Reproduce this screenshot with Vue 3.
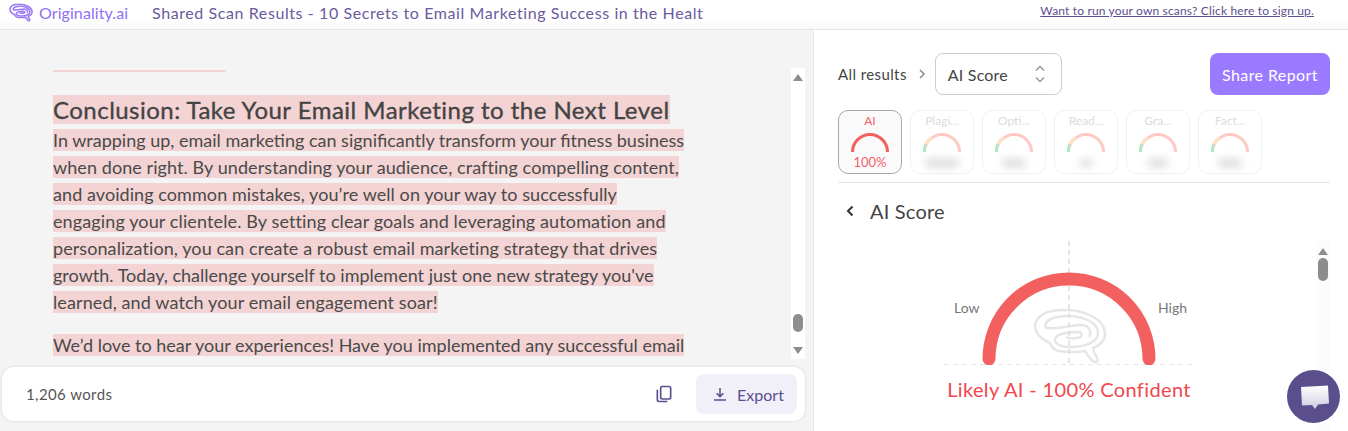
<template>
  <div class="page">
    <header class="topbar">
      <div class="logo">
        <svg class="logo-icon" viewBox="88 66 76 58" fill="none">
          <path :d="brainOuter" />
          <path :d="brainInner" />
          <path :d="brainFold" />
        </svg>
        <span>Originality.ai</span>
      </div>
      <div class="doc-title">Shared Scan Results - 10 Secrets to Email Marketing Success in the Healt</div>
      <a class="signup">Want to run your own scans? Click here to sign up.</a>
    </header>

    <main class="main">
      <section class="left">
        <div class="reader">
          <article class="doc">
            <div class="rule"></div>
            <h2 class="doc-heading"><span>Conclusion: Take Your Email Marketing to the Next Level</span></h2>
            <p class="para">
              <span v-for="line in conclusion" :key="line.text" class="line" :style="{ letterSpacing: line.spacing + 'px' }"><span>{{ line.text }}</span></span>
            </p>
            <p class="para para-next">
              <span class="line"><span>We’d love to hear your experiences! Have you implemented any successful email</span></span>
            </p>
          </article>
          <div class="scrollbar">
            <span class="arrow up"></span>
            <span class="thumb"></span>
            <span class="arrow down"></span>
          </div>
        </div>
        <div class="footer-card">
          <span class="words">1,206 words</span>
          <svg class="copy-icon" viewBox="0 0 24 24" fill="none">
            <rect x="8" y="3" width="12" height="15" rx="2" />
            <path d="M4 7v12a2 2 0 0 0 2 2h10" />
          </svg>
          <button class="export">
            <svg viewBox="0 0 24 24" fill="none">
              <path d="M12 4v11M7.5 11l4.5 4.5 4.5-4.5M4 20h16" />
            </svg>
            Export
          </button>
        </div>
      </section>

      <aside class="right">
        <div class="toolbar">
          <span class="crumb">All results</span>
          <svg class="crumb-arrow" viewBox="0 0 10 12" fill="none"><path d="M3 2l4 4-4 4" /></svg>
          <div class="select">
            <span>AI Score</span>
            <svg viewBox="0 0 12 20" fill="none"><path d="M2 6.5L6 2.5l4 4M2 13.5l4 4 4-4" /></svg>
          </div>
          <button class="share">Share Report</button>
        </div>

        <div class="tabs">
          <div v-for="tab in tabs" :key="tab.name" class="tab" :class="{ active: tab.active }">
            <span class="tab-name">{{ tab.name }}</span>
            <svg class="tab-gauge" viewBox="0 0 40 22" fill="none">
              <template v-if="tab.active">
                <path d="M2.5 21A17.5 17.5 0 0 1 37.5 21" stroke="#f25f5f" />
              </template>
              <template v-else>
                <path d="M2.5 21A17.5 17.5 0 0 1 37.5 21" stroke="#ffc9c5" />
                <path d="M3.5 13A17.5 17.5 0 0 1 10 6.6" stroke="#ffe0c8" />
                <path d="M2.5 21A17.5 17.5 0 0 1 3.5 13.5" stroke="#a6edc4" />
              </template>
            </svg>
            <span v-if="tab.active" class="tab-value">100%</span>
            <span v-else class="tab-blur" :style="{ width: tab.blur + 'px' }"></span>
          </div>
        </div>

        <div class="score-head">
          <svg viewBox="0 0 10 14" fill="none"><path d="M7.5 2.5L3 7l4.5 4.5" /></svg>
          <span>AI Score</span>
        </div>

        <div class="score-body">
          <div class="gauge">
            <svg viewBox="0 0 250 124" fill="none">
              <g class="brain">
                <path :d="brainOuter" />
                <path :d="brainInner" />
                <path :d="brainFold" />
              </g>
              <path class="dash" d="M125 0V124M0 124H250" />
              <path class="arc" d="M45 118A80 80 0 0 1 205 118" />
            </svg>
            <span class="low">Low</span>
            <span class="high">High</span>
          </div>
          <div class="verdict">Likely AI - 100% Confident</div>
          <div class="side-scroll">
            <span class="arrow up"></span>
            <span class="thumb"></span>
          </div>
        </div>
      </aside>
    </main>

    <div class="chat">
      <svg viewBox="0 0 30 26">
        <defs>
          <linearGradient id="chatFill" x1="0" y1="0" x2="0" y2="1">
            <stop offset="0" stop-color="#ffffff" />
            <stop offset="1" stop-color="#cfcde0" />
          </linearGradient>
        </defs>
        <path d="M2 2L29 0.5L30 18.5L19 19.5L16 24L13 20L3 20.5Z" fill="url(#chatFill)" />
      </svg>
    </div>
  </div>
</template>

<script setup>
// brain mark, shared by the logo and the big gauge
const brainOuter = 'M91 85C92 74 104 69 118 69C140 68 161 78 161 93C161 100 155 105 149 107C149 113 156 117 153 121C149 123 144 115 141 110C132 112 122 111 114 110C108 108 107 104 106 102C99 99 91 93 91 85Z'
const brainInner = 'M101 86C101 78 112 75 124 75C140 75 154 82 154 92C154 101 142 106 126 106C117 106 110 103 111 98C113 93 124 91 134 91C139 91 139 96 133 97C128 98 124 97 122 96'
const brainFold = 'M101 86C110 90 125 84 137 84C146 84 148 92 145 96'

const conclusion = [
  { text: 'In wrapping up, email marketing can significantly transform your fitness business', spacing: 0 },
  { text: 'when done right. By understanding your audience, crafting compelling content,', spacing: 0.08 },
  { text: 'and avoiding common mistakes, you’re well on your way to successfully', spacing: 0.07 },
  { text: 'engaging your clientele. By setting clear goals and leveraging automation and', spacing: 0.12 },
  { text: 'personalization, you can create a robust email marketing strategy that drives', spacing: 0.08 },
  { text: 'growth. Today, challenge yourself to implement just one new strategy you\'ve', spacing: 0.01 },
  { text: 'learned, and watch your email engagement soar!', spacing: 0.11 }
]

const tabs = [
  { name: 'AI', active: true },
  { name: 'Plagi...', blur: 34 },
  { name: 'Opti...', blur: 24 },
  { name: 'Read...', blur: 12 },
  { name: 'Gra...', blur: 20 },
  { name: 'Fact...', blur: 24 }
]
</script>

<style>
html,
body {
  margin: 0;
  overflow: hidden;
}
</style>

<style scoped>
.page {
  position: relative;
  width: 1348px;
  height: 431px;
  overflow: hidden;
  display: flex;
  flex-direction: column;
  font-family: Lato, "Liberation Sans", sans-serif;
  color: #444;
  background: #fff;
}

/* top bar */
.topbar {
  height: 30px;
  flex-shrink: 0;
  display: flex;
  align-items: center;
  padding: 0 34px 5px 9px;
  box-sizing: border-box;
  border-bottom: 1px solid #e4e2ee;
  background: linear-gradient(#fff 60%, #f9f9f9);
}

.logo {
  display: flex;
  align-items: center;
  gap: 6px;
  font-size: 16px;
  letter-spacing: 0.08px;
  color: #8f6ff5;
  width: 143px;
}

.logo-icon {
  width: 24px;
  height: 19px;
}

.logo-icon path {
  stroke: #9a7bf7;
  stroke-width: 5;
}

.doc-title {
  font-size: 16px;
  letter-spacing: 0.59px;
  color: #6a5a9e;
  white-space: nowrap;
}

.signup {
  margin-left: auto;
  margin-bottom: 4px;
  font-size: 12px;
  letter-spacing: 0.16px;
  color: #5c4e90;
  text-decoration: underline;
}

.main {
  flex: 1;
  display: flex;
  min-height: 0;
}

/* left */
.left {
  width: 813px;
  flex-shrink: 0;
  display: flex;
  flex-direction: column;
  background: #f4f4f4;
  border-right: 1px solid #e8e8e8;
}

.reader {
  height: 329px;
  display: flex;
}

.doc {
  flex: 1;
  padding: 40px 0 0 53px;
  overflow: hidden;
  height: 329px;
  box-sizing: border-box;
}

.rule {
  width: 173px;
  height: 2px;
  background: #f3d3d3;
}

.doc-heading {
  margin: 24px 0 0;
  font-size: 24px;
  font-weight: 400;
  letter-spacing: 0.47px;
  -webkit-text-stroke: 0.35px #444;
  line-height: 28px;
  white-space: nowrap;
  color: #444;
}

.doc-heading span,
.line span {
  background: #f3d3d3;
}

.para {
  margin: 3px 0 0;
  font-size: 18px;
  line-height: 27px;
  color: #4a4a4a;
}

.para-next {
  margin-top: 16px;
}

.line {
  display: block;
  white-space: nowrap;
}

.scrollbar {
  width: 14px;
  margin: 38px 8px 0 0;
  height: 291px;
  background: #fff;
  display: flex;
  flex-direction: column;
  align-items: center;
  padding: 6px 0 5px;
  box-sizing: border-box;
}

.arrow {
  width: 0;
  height: 0;
  border-left: 5px solid transparent;
  border-right: 5px solid transparent;
}

.arrow.up {
  border-bottom: 7px solid #8d8d8d;
}

.arrow.down {
  border-top: 7px solid #8d8d8d;
}

.thumb {
  width: 10px;
  background: #8d8d8d;
  border-radius: 5px;
}

.scrollbar .thumb {
  height: 18px;
  margin-top: auto;
  margin-bottom: 15px;
}

.footer-card {
  margin: 8px 8px 0 2px;
  height: 54px;
  display: flex;
  align-items: center;
  padding: 0 8px 0 24px;
  background: #fff;
  border-radius: 12px;
  box-shadow: 0 0 3px rgba(90, 78, 140, 0.2);
}

.words {
  font-size: 15px;
  letter-spacing: 0.4px;
  color: #555;
  margin-right: auto;
}

.copy-icon {
  width: 20px;
  height: 20px;
  margin-right: 22px;
}

.copy-icon rect,
.copy-icon path {
  stroke: #5c4e90;
  stroke-width: 2;
}

.export {
  width: 101px;
  height: 40px;
  display: flex;
  align-items: center;
  justify-content: center;
  gap: 8px;
  padding: 0 0 0 2px;
  border: 0;
  border-radius: 8px;
  background: #f1eff8;
  color: #5c4e90;
  font-family: inherit;
  font-size: 16px;
}

.export svg {
  width: 18px;
  height: 18px;
}

.export path {
  stroke: #5c4e90;
  stroke-width: 2;
}

/* right */
.right {
  flex: 1;
  padding: 23px 18px 0 24px;
  min-width: 0;
  display: flex;
  flex-direction: column;
}

.toolbar {
  display: flex;
  align-items: center;
  height: 42px;
}

.crumb {
  font-size: 15px;
  letter-spacing: 0.4px;
  color: #444;
}

.crumb-arrow {
  width: 10px;
  height: 12px;
  margin: 0 8px 0 10px;
}

.crumb-arrow path {
  stroke: #888;
  stroke-width: 1.5;
}

.select {
  width: 127px;
  height: 42px;
  box-sizing: border-box;
  border: 1px solid #ccc;
  border-radius: 8px;
  display: flex;
  align-items: center;
  justify-content: space-between;
  padding: 0 15px 0 12px;
  font-size: 16px;
  letter-spacing: 0.2px;
  color: #444;
}

.select svg {
  width: 12px;
  height: 20px;
}

.select path {
  stroke: #999;
  stroke-width: 1.5;
}

.share {
  margin-left: auto;
  width: 120px;
  height: 42px;
  padding: 0;
  border: 0;
  border-radius: 8px;
  background: #9a7bff;
  color: #fff;
  font-family: inherit;
  font-size: 16px;
  letter-spacing: 0.4px;
}

.tabs {
  display: flex;
  gap: 8px;
  margin-top: 15px;
  padding-bottom: 8px;
  border-bottom: 1px solid #e6e6e6;
}

.tab {
  width: 64px;
  height: 64px;
  box-sizing: border-box;
  border: 1px solid #f2f2f2;
  border-radius: 10px;
  display: flex;
  flex-direction: column;
  align-items: center;
  font-size: 12px;
  color: #dcdcdc;
}

.tab.active {
  border-color: #a8a8a8;
  background: #fafafa;
  color: #f25f6a;
}

.tab-name {
  line-height: 14px;
  margin-top: 3px;
}

.tab-gauge {
  width: 40px;
  height: 22px;
  margin-top: 3px;
}

.tab-gauge path {
  stroke-width: 3;
}

.tab-value {
  font-size: 13px;
  line-height: 16px;
  margin-top: 1px;
}

.tab-blur {
  height: 8px;
  margin-top: 6px;
  background: #d8d8d8;
  border-radius: 4px;
  filter: blur(4px);
}

.score-head {
  display: flex;
  align-items: center;
  gap: 15px;
  margin-top: 16px;
  padding-left: 7px;
  font-size: 20px;
  letter-spacing: 0.2px;
  color: #444;
}

.score-head svg {
  width: 10px;
  height: 14px;
}

.score-head path {
  stroke: #333;
  stroke-width: 2;
}

.score-body {
  position: relative;
  flex: 1;
  margin-top: 18px;
  display: flex;
  flex-direction: column;
  align-items: center;
  padding-right: 30px;
}

.gauge {
  position: relative;
  width: 250px;
  height: 124px;
}

.gauge svg {
  display: block;
  width: 250px;
  height: 124px;
}

.dash {
  stroke: #ddd;
  stroke-width: 1.5;
  stroke-dasharray: 5 4;
}

.brain path {
  stroke: #e6e6e6;
  stroke-width: 2.5;
}

.arc {
  stroke: #f36060;
  stroke-width: 13;
  stroke-linecap: round;
}

.low,
.high {
  position: absolute;
  top: 58px;
  font-size: 14px;
  color: #777;
}

.low {
  left: 10px;
}

.high {
  right: 7px;
}

.verdict {
  margin-top: 12px;
  font-size: 20px;
  letter-spacing: 0.36px;
  color: #f0474d;
}

.side-scroll {
  position: absolute;
  top: 0;
  right: 0;
  bottom: 0;
  width: 14px;
  background: #fcfcfc;
  display: flex;
  flex-direction: column;
  align-items: center;
  gap: 3px;
  padding-top: 7px;
  box-sizing: border-box;
}

.side-scroll .thumb {
  height: 23px;
}

.chat {
  position: absolute;
  left: 1287px;
  top: 370px;
  width: 53px;
  height: 53px;
  border-radius: 50%;
  background: #5a4e8c;
  display: flex;
  align-items: center;
  justify-content: center;
}

.chat svg {
  width: 30px;
  height: 26px;
  margin-top: 3px;
}
</style>
